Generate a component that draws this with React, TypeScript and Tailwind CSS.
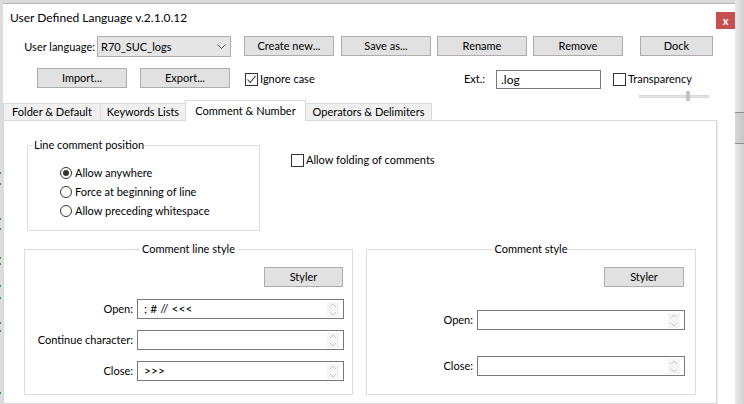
import React from "react";

const Button = ({ label, className = "" }: { label: string; className?: string }) => (
    <button
        className={`h-[20px] bg-[#e1e1e1] border border-[#adadad] flex items-center justify-center text-black ${className}`}
    >
        {label}
    </button>
);

const CheckBox = ({ checked, label }: { checked?: boolean; label: string }) => (
    <div className="flex items-center">
        <span className="w-[13px] h-[13px] border border-[#333333] bg-white flex items-center justify-center">
            {checked && (
                <svg viewBox="0 0 11 11" className="w-[11px] h-[11px]">
                    <path d="M1.5 5.5 L4.2 8.5 L9.5 2" stroke="#333333" strokeWidth="1.1" fill="none" />
                </svg>
            )}
        </span>
        <span className="ml-[2px]">{label}</span>
    </div>
);

const Radio = ({ checked, label }: { checked?: boolean; label: string }) => (
    <div className="flex items-center h-[19px]">
        <span className="w-[12px] h-[12px] rounded-full border border-[#333333] bg-white flex items-center justify-center">
            {checked && <span className="w-[6px] h-[6px] rounded-full bg-[#333333]" />}
        </span>
        <span className="ml-[3px]">{label}</span>
    </div>
);

// faint up/down arrows at the right of the edit boxes
const Spinner = () => (
    <div className="w-[12px] h-[15px] flex flex-col">
        <div className="flex-1 bg-[#f4f4f4] flex items-center justify-center">
            <svg viewBox="0 0 8 5" className="w-[8px] h-[5px]">
                <path d="M1 4 L4 1 L7 4" stroke="#c8c8c8" strokeWidth="1" fill="none" />
            </svg>
        </div>
        <div className="flex-1 bg-[#f4f4f4] flex items-center justify-center">
            <svg viewBox="0 0 8 5" className="w-[8px] h-[5px]">
                <path d="M1 1 L4 4 L7 1" stroke="#c8c8c8" strokeWidth="1" fill="none" />
            </svg>
        </div>
    </div>
);

const FieldRow = ({
    label,
    value = "",
    width,
    className = "",
}: {
    label: string;
    value?: string;
    width: string;
    className?: string;
}) => (
    <div className={`flex items-center ${className}`}>
        <span className="mr-[4px]">{label}</span>
        <div className={`${width} h-[20px] border border-[#7a7a7a] bg-white flex items-center pl-[6px] pr-[4px]`}>
            <span className="flex-1 text-[12px]">{value}</span>
            <Spinner />
        </div>
    </div>
);

const GroupTitle = ({ title, center }: { title: string; center?: boolean }) => (
    <div
        className={`-mt-[9px] w-fit bg-white leading-[16px] ${center ? "mx-auto px-[2px]" : "ml-[5px] px-[1px]"}`}
    >
        {title}
    </div>
);

const tabs = [
    { label: "Folder & Default", w: "w-[98px]" },
    { label: "Keywords Lists", w: "w-[86px]" },
    { label: "Comment & Number", w: "w-[121px]", active: true },
    { label: "Operators & Delimiters", w: "w-[127px]" },
];

const greenDots = [172, 183, 218, 228, 257, 263, 285, 297, 322, 330, 392];

export default function App() {
    return (
        <div className="w-[744px] h-[404px] bg-[#dadada] flex overflow-hidden whitespace-nowrap text-[11px] leading-[16px] text-black font-[Lato,sans-serif]">
            {/* editor behind the dialog */}
            <div className="w-[3px] relative bg-[#dcdcdc]">
                {greenDots.map((y) => (
                    <span key={y} className="absolute left-0 w-[1px] h-[2px] bg-[#2e9a3a]" style={{ top: y }} />
                ))}
            </div>

            {/* Dialog */}
            <div className="w-[732px] mt-[3px] bg-white border-t border-[#b4b4b4] flex flex-col">
                {/* Title bar */}
                <div className="h-[33px] flex justify-between items-start">
                    <span className="pl-[7px] pt-[6px] text-[12px]">User Defined Language v.2.1.0.12</span>
                    <div className="mt-[8px] w-[19px] h-[17px] bg-[#c75050] flex items-center justify-center text-white font-bold text-[11px] leading-none">
                        x
                    </div>
                </div>

                {/* Row 1 */}
                <div className="flex items-start pl-[16px] h-[21px]">
                    <span className="w-[76px] h-[21px] flex items-center justify-end">User language:</span>
                    <div className="ml-[2px] w-[134px] h-[21px] bg-[#e5e5e5] border border-[#acacac] flex items-center pl-[3px] pr-[4px]">
                        <span className="flex-1">R70_SUC_logs</span>
                        <svg viewBox="0 0 9 5" className="w-[9px] h-[5px]">
                            <path d="M0.5 0.5 L4.5 4.5 L8.5 0.5" stroke="#555555" strokeWidth="1" fill="none" />
                        </svg>
                    </div>
                    <Button label="Create new..." className="ml-[13px] w-[90px]" />
                    <Button label="Save as..." className="ml-[7px] w-[90px]" />
                    <Button label="Rename" className="ml-[6px] w-[90px]" />
                    <Button label="Remove" className="ml-[6px] w-[90px]" />
                    <Button label="Dock" className="ml-[17px] w-[73px]" />
                </div>

                {/* Row 2 */}
                <div className="flex items-start mt-[11px] h-[22px]">
                    <Button label="Import..." className="ml-[34px] w-[90px]" />
                    <Button label="Export..." className="ml-[13px] w-[90px]" />
                    <div className="ml-[15px] w-[219px] h-[22px] flex items-center">
                        <CheckBox checked label="Ignore case" />
                    </div>
                    <span className="w-[32px] h-[22px] flex items-center">Ext.:</span>
                    <div className="mt-[2px] w-[105px] h-[19px] border border-[#7a7a7a] bg-white flex items-center pl-[4px] text-[12px]">
                        .log
                    </div>
                    <div className="ml-[12px] h-[22px] flex items-center">
                        <CheckBox label="Transparency" />
                    </div>
                </div>

                {/* Transparency slider */}
                <div className="h-[10px]">
                    <div className="ml-[636px] w-[70px] h-[10px] relative">
                        <div className="absolute left-0 right-0 top-[5px] h-[3px] bg-[#e2e2e2] border border-[#d8d8d8]" />
                        <div className="absolute left-[47px] top-[1px] w-[4px] h-[10px] bg-[#c4c4c4]" />
                    </div>
                </div>

                {/* Tabs */}
                <div className="flex items-end h-[20px]">
                    {tabs.map((t, i) => (
                        <div
                            key={t.label}
                            className={`${t.w} ${i > 0 ? "-ml-px" : ""} border border-b-0 border-[#d9d9d9] flex justify-center ${
                                t.active
                                    ? "h-[21px] -mb-px bg-white relative z-10 items-start pt-[2px]"
                                    : "h-[17px] bg-[#f0f0f0] items-center"
                            }`}
                        >
                            {t.label}
                        </div>
                    ))}
                </div>

                {/* Tab panel */}
                <div className="w-[714px] h-[290px] border border-[#d9d9d9] bg-white flex flex-col shadow-[1px_0_0_#ececec]">
                    <div className="flex items-start mt-[24px] ml-[23px]">
                        <div className="w-[233px] h-[86px] border border-[#dcdcdc]">
                            <GroupTitle title="Line comment position" />
                            <div className="mt-[10px] pl-[32px]">
                                <Radio checked label="Allow anywhere" />
                                <Radio label="Force at beginning of line" />
                                <Radio label="Allow preceding whitespace" />
                            </div>
                        </div>
                        <div className="ml-[31px] mt-[7px] h-[16px] flex items-center">
                            <CheckBox label="Allow folding of comments" />
                        </div>
                    </div>

                    <div className="flex items-start mt-[18px] ml-[20px]">
                        <div className="w-[329px] h-[146px] border border-[#dcdcdc] flex flex-col">
                            <GroupTitle title="Comment line style" center />
                            <Button label="Styler" className="mt-[10px] self-end mr-[9px] w-[79px]" />
                            <div className="flex flex-col items-end pr-[8px]">
                                <FieldRow label="Open:" value="; # // <<<" width="w-[207px]" className="mt-[12px]" />
                                <FieldRow label="Continue character:" width="w-[207px]" className="mt-[11px]" />
                                <FieldRow label="Close:" value=">>>" width="w-[207px]" className="mt-[11px]" />
                            </div>
                        </div>

                        <div className="ml-[13px] w-[330px] h-[146px] border border-[#dcdcdc] flex flex-col">
                            <GroupTitle title="Comment style" center />
                            <Button label="Styler" className="mt-[10px] self-end mr-[11px] w-[80px]" />
                            <div className="flex flex-col items-end pr-[10px]">
                                <FieldRow label="Open:" width="w-[208px]" className="mt-[23px]" />
                                <FieldRow label="Close:" width="w-[208px]" className="mt-[26px]" />
                            </div>
                        </div>
                    </div>
                </div>
            </div>

            {/* scrollbar of the window behind */}
            <div className="w-[9px] flex flex-col bg-gradient-to-r from-[#e8e8e8] to-[#d2d2d2]">
                <div className="h-[112px]" />
                <div className="h-[32px] border-y border-[#8c8c8c] bg-gradient-to-r from-[#d8d8d8] to-[#c6c6c6]" />
            </div>
        </div>
    );
}
